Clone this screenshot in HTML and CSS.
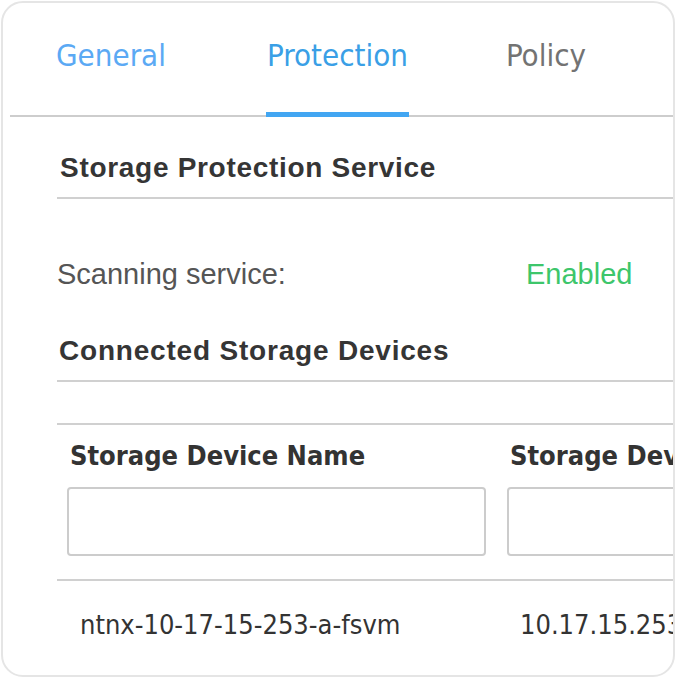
FILE: index.html
```html
<!DOCTYPE html>
<html>
<head>
<meta charset="utf-8">
<link rel="stylesheet" href="styles.css">
</head>
<body>
<div class="card">
  <div class="tabs">
    <div class="tab tab-general">General</div>
    <div class="tab tab-active">Protection</div>
    <div class="tab tab-policy">Policy</div>
  </div>
  <div class="content">
    <div class="heading heading-first">Storage Protection Service</div>
    <div class="field-row">
      <div class="field-label">Scanning service:</div>
      <div class="field-value">Enabled</div>
    </div>
    <div class="heading heading-second">Connected Storage Devices</div>
    <div class="table">
      <div class="thead">
        <div class="th"><div class="th-title">Storage Device Name</div><div class="filter"></div></div>
        <div class="th"><div class="th-title">Storage Device IP Address</div><div class="filter"></div></div>
      </div>
      <div class="tr">
        <div class="td">ntnx-10-17-15-253-a-fsvm</div>
        <div class="td">10.17.15.253</div>
      </div>
    </div>
  </div>
</div>
</body>
</html>
```
FILE: styles.css
```css
html, body {
  margin: 0;
  padding: 0;
  background: #ffffff;
}
body {
  padding: 1px;
}
.card {
  box-sizing: border-box;
  width: 674px;
  height: 676px;
  border: 2px solid #e5e5e5;
  border-radius: 22px;
  overflow: hidden;
  background: #ffffff;
}
.tabs {
  display: flex;
  gap: 99px;
  margin-left: 7px;
  padding-left: 45px;
  padding-top: 34px;
  border-bottom: 2px solid #cdcdcd;
  font-family: "DejaVu Sans Condensed", "DejaVu Sans", sans-serif;
  font-size: 31px;
  line-height: 36px;
}
.tab {
  padding: 0 1px 39px;
  border-bottom: 5px solid transparent;
  margin-bottom: -2px;
  white-space: nowrap;
}
.tab-general { color: #5ba9f4; }
.tab-active {
  color: #3a9fe6;
  border-bottom-color: #42a6f2;
}
.tab-policy {
  color: #737373;
  margin-left: -3px;
}
.content {
  padding-left: 54px;
  padding-top: 35px;
}
.heading {
  font-family: "Liberation Sans", Arial, sans-serif;
  font-weight: bold;
  font-size: 28px;
  line-height: 32px;
  letter-spacing: 0.7px;
  color: #353535;
  padding-left: 3px;
  padding-bottom: 13px;
  border-bottom: 2px solid #d0d0d0;
  white-space: nowrap;
}
.heading-second {
  letter-spacing: 0.8px;
  padding-left: 2px;
  padding-bottom: 13px;
}
.field-row {
  display: flex;
  padding-top: 58px;
  padding-bottom: 44px;
  font-family: "Liberation Sans", Arial, sans-serif;
  font-size: 29px;
  line-height: 34px;
}
.field-label {
  width: 469px;
  color: #555555;
}
.field-value {
  color: #3dc66b;
}
.table {
  margin-top: 41px;
  border-top: 2px solid #d0d0d0;
  font-family: "DejaVu Sans Condensed", "DejaVu Sans", sans-serif;
  font-size: 27px;
  line-height: 32px;
  color: #333333;
  width: 900px;
}
.thead {
  display: grid;
  grid-template-columns: 440px 440px;
  padding-top: 15px;
  padding-bottom: 23px;
  border-bottom: 2px solid #d0d0d0;
}
.th {
  padding: 0 10px;
}
.th-title {
  font-weight: bold;
  padding-left: 3px;
  white-space: nowrap;
  margin-bottom: 15px;
}
.filter {
  box-sizing: border-box;
  width: 419px;
  height: 69px;
  border: 2px solid #cccccc;
  border-radius: 4px;
  background: #ffffff;
}
.tr {
  display: grid;
  grid-template-columns: 440px 440px;
  padding-top: 28px;
}
.td {
  padding-left: 23px;
  white-space: nowrap;
}
```
